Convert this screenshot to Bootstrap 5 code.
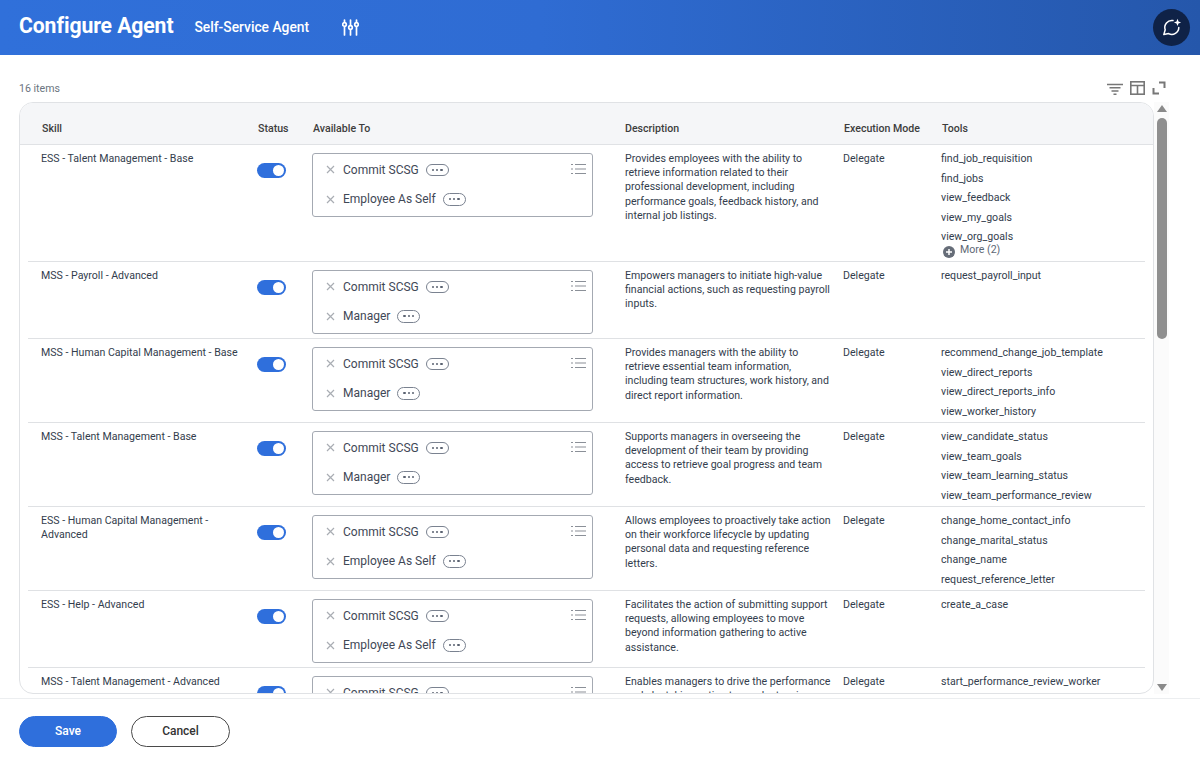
<!DOCTYPE html>
<html lang="en">
<head>
<meta charset="UTF-8">
<title>Configure Agent</title>
<link href="https://cdn.jsdelivr.net/npm/bootstrap@5.3.0/dist/css/bootstrap.min.css" rel="stylesheet">
<style>
html, body { height: 760px; overflow: hidden; }
body { font-family: Roboto, "Liberation Sans", sans-serif; font-size: 10.6px; color: #333d4d; background: #fff; }
.app-head { height: 55px; background: linear-gradient(90deg, #3070da 0%, #2f6cd3 45%, #2557ab 100%); color: #fff; padding: 0 10px 0 19px; }
.app-title { font-size: 21.2px; font-weight: 700; margin: 0 21px 3px 0; letter-spacing: -.1px; }
.app-sub { font-size: 13.8px; font-weight: 500; margin-right: 33px; }
.ai-btn { width: 37px; height: 37px; border-radius: 50%; background: #0f2247; }
.tools-bar { height: 47px; padding: 0 34px 0 19px; }
.count-txt { color: #6b7480; font-size: 10.6px; padding-top: 26px; }
.bar-icons { gap: 7px; padding-top: 26px; }
.grid-wrap { padding-left: 19px; }
.grid-panel { width: 1135px; height: 592px; border: 1px solid #e0e2e5; border-radius: 14px; overflow: hidden; }
.grid-head { height: 42px; background: #f5f6f8; border-bottom: 1px solid #e0e2e5; padding: 0 8px; font-weight: 500; color: #3d3d3d; }
.grid-row { margin: 0 8px; border-bottom: 1px solid #dfe1e4; }
.c-skill { width: 229px; padding: 7px 16px 0 13px; line-height: 14.4px; flex: none; }
.c-status { width: 55px; padding-top: 18px; flex: none; }
.c-avail { width: 313px; padding: 8px 0 4px; flex: none; }
.c-desc { width: 218px; padding: 7px 10px 0 0; line-height: 14.2px; flex: none; }
.c-mode { width: 98px; padding-top: 7px; flex: none; line-height: 14.2px; }
.c-tools { flex: 1; padding-top: 4px; }
.grid-head > div { padding-top: 6px; padding-left: 1px; line-height: 40px; }
.grid-head .c-skill { padding-left: 14px; }
.grid-head .c-desc { padding-left: 0; }
.c-tools div { height: 19.6px; line-height: 19.6px; }
.more-line { height: 14px !important; line-height: 14px !important; color: #5e6875; margin: -4px 0 0 2px; gap: 5px; }
.more-line svg { margin-top: 3px; }
.switch-pill { display: block; width: 29px; height: 15px; border-radius: 8px; background: #2f6fdc; position: relative; }
.switch-pill::after { content: ""; position: absolute; right: 2px; top: 2px; width: 11px; height: 11px; border-radius: 50%; background: #fff; }
.pick-box { width: 281px; height: 64px; border: 1px solid #a4a9b2; border-radius: 3px; padding: 1px 8px 0 13px; position: relative; font-size: 12px; color: #3f4856; }
.pick-item { height: 29.5px; gap: 8px; }
.pick-item .x-mark { flex: none; }
.pill-dots { width: 23px; height: 12.5px; border: 1px solid #7a8290; border-radius: 7px; margin-left: -1px; gap: 2px; }
.pill-dots i { width: 2.4px; height: 2.4px; border-radius: 50%; background: #5a6270; display: block; }
.list-ic { position: absolute; right: 6px; top: 9px; }
.v-scroll { width: 15px; background: #fbfbfb; }
.v-scroll .up { width: 0; height: 0; border-left: 5px solid transparent; border-right: 5px solid transparent; border-bottom: 7px solid #8a8a8a; margin: 3px auto 6px; }
.v-scroll .thumb { width: 10px; height: 221px; background: #8f8f8f; border-radius: 5px; margin: 0 auto; }
.v-scroll .down { width: 0; height: 0; border-left: 5px solid transparent; border-right: 5px solid transparent; border-top: 7px solid #8a8a8a; margin: auto auto 3px; }
.save-bar { height: 62px; border-top: 1px solid #eceef0; padding: 17px 0 0 19px; margin-top: 4px; gap: 14px; }
.btn-save, .btn-cancel { height: 31px; width: 98px; border-radius: 16px; font-size: 12px; font-weight: 500; padding: 0; line-height: 29px; }
.btn-save { background: #2f6fdc; color: #fff; border: 1px solid #2f6fdc; }
.btn-cancel { background: #fff; color: #333; border: 1px solid #4a4a4a; width: 99px; }
</style>
</head>
<body>
<header class="app-head d-flex align-items-center">
    <h1 class="app-title">Configure Agent</h1>
    <span class="app-sub">Self-Service Agent</span>
    <svg width="17" height="17" viewBox="0 0 17 17" fill="none" stroke="#fff" stroke-width="1.7" stroke-linecap="round">
        <path d="M2.5 1v2M2.5 8v8M8.5 1v5M8.5 11v5M14.5 1v2M14.5 8v8"/>
        <circle cx="2.5" cy="5.5" r="1.8"/><circle cx="8.5" cy="8.5" r="1.8"/><circle cx="14.5" cy="5.5" r="1.8"/>
    </svg>
    <div class="ai-btn ms-auto d-flex align-items-center justify-content-center">
        <svg width="20" height="20" viewBox="0 0 20 20" fill="none">
            <path d="M11 2.6A7 7 0 0 0 3.2 11.8L1.8 16.6 6.6 15.6A7 7 0 0 0 16.8 9.5" stroke="#fff" stroke-width="1.5" stroke-linecap="round" stroke-linejoin="round"/>
            <path d="M15.5 0.8l1 2.6 2.6 1-2.6 1-1 2.6-1-2.6-2.6-1 2.6-1z" fill="#fff"/>
        </svg>
    </div>
</header>

<div class="tools-bar d-flex justify-content-between">
    <span class="count-txt">16 items</span>
    <div class="bar-icons d-flex align-items-start">
        <svg width="16" height="15" viewBox="0 0 16 15" fill="none" stroke="#777" stroke-width="1.4"><path d="M0 3.5h16M2.5 6.8h11M4.5 10h7M6.5 13.2h3"/></svg>
        <svg width="15" height="14" viewBox="0 0 15 14" fill="none" stroke="#777" stroke-width="1.6"><rect x=".8" y=".8" width="13.4" height="12.4"/><path d="M.8 4.5h13.4M7.5 4.5v8.7"/></svg>
        <svg width="14" height="14" viewBox="0 0 14 14" fill="none" stroke="#777" stroke-width="2"><path d="M7 1.5h5.5V7M1.5 7v5.5H7"/></svg>
    </div>
</div>

<div class="grid-wrap d-flex">
    <div class="grid-panel">
        <div class="grid-head d-flex">
            <div class="c-skill">Skill</div>
            <div class="c-status">Status</div>
            <div class="c-avail">Available To</div>
            <div class="c-desc">Description</div>
            <div class="c-mode">Execution Mode</div>
            <div class="c-tools">Tools</div>
        </div>

        <div class="grid-row d-flex" style="height:117px">
            <div class="c-skill">ESS - Talent Management - Base</div>
            <div class="c-status"><span class="switch-pill"></span></div>
            <div class="c-avail"><div class="pick-box">
                <div class="pick-item d-flex align-items-center"><svg class="x-mark" width="9" height="9" viewBox="0 0 9 9" stroke="#a9adb3" stroke-width="1.2"><path d="M1 1l7 7M8 1l-7 7"/></svg><span>Commit SCSG</span><span class="pill-dots d-flex align-items-center justify-content-center"><i></i><i></i><i></i></span></div>
                <div class="pick-item d-flex align-items-center"><svg class="x-mark" width="9" height="9" viewBox="0 0 9 9" stroke="#a9adb3" stroke-width="1.2"><path d="M1 1l7 7M8 1l-7 7"/></svg><span>Employee As Self</span><span class="pill-dots d-flex align-items-center justify-content-center"><i></i><i></i><i></i></span></div>
                <svg class="list-ic" width="15" height="12" viewBox="0 0 15 12" stroke="#8b9098" stroke-width="1.1"><path d="M4 1.5h11M4 6h11M4 10.5h11M0 1.5h2M0 6h2M0 10.5h2"/></svg>
            </div></div>
            <div class="c-desc">Provides employees with the ability to retrieve information related to their professional development, including performance goals, feedback history, and internal job listings.</div>
            <div class="c-mode">Delegate</div>
            <div class="c-tools">
                <div>find_job_requisition</div><div>find_jobs</div><div>view_feedback</div><div>view_my_goals</div><div>view_org_goals</div>
                <div class="more-line d-flex"><svg width="12" height="12" viewBox="0 0 12 12"><circle cx="6" cy="6" r="6" fill="#666d78"/><path d="M6 3v6M3 6h6" stroke="#fff" stroke-width="1.5"/></svg><span>More (2)</span></div>
            </div>
        </div>

        <div class="grid-row d-flex" style="height:77px">
            <div class="c-skill">MSS - Payroll - Advanced</div>
            <div class="c-status"><span class="switch-pill"></span></div>
            <div class="c-avail"><div class="pick-box">
                <div class="pick-item d-flex align-items-center"><svg class="x-mark" width="9" height="9" viewBox="0 0 9 9" stroke="#a9adb3" stroke-width="1.2"><path d="M1 1l7 7M8 1l-7 7"/></svg><span>Commit SCSG</span><span class="pill-dots d-flex align-items-center justify-content-center"><i></i><i></i><i></i></span></div>
                <div class="pick-item d-flex align-items-center"><svg class="x-mark" width="9" height="9" viewBox="0 0 9 9" stroke="#a9adb3" stroke-width="1.2"><path d="M1 1l7 7M8 1l-7 7"/></svg><span>Manager</span><span class="pill-dots d-flex align-items-center justify-content-center"><i></i><i></i><i></i></span></div>
                <svg class="list-ic" width="15" height="12" viewBox="0 0 15 12" stroke="#8b9098" stroke-width="1.1"><path d="M4 1.5h11M4 6h11M4 10.5h11M0 1.5h2M0 6h2M0 10.5h2"/></svg>
            </div></div>
            <div class="c-desc">Empowers managers to initiate high-value financial actions, such as requesting payroll inputs.</div>
            <div class="c-mode">Delegate</div>
            <div class="c-tools"><div>request_payroll_input</div></div>
        </div>

        <div class="grid-row d-flex" style="height:84px">
            <div class="c-skill">MSS - Human Capital Management - Base</div>
            <div class="c-status"><span class="switch-pill"></span></div>
            <div class="c-avail"><div class="pick-box">
                <div class="pick-item d-flex align-items-center"><svg class="x-mark" width="9" height="9" viewBox="0 0 9 9" stroke="#a9adb3" stroke-width="1.2"><path d="M1 1l7 7M8 1l-7 7"/></svg><span>Commit SCSG</span><span class="pill-dots d-flex align-items-center justify-content-center"><i></i><i></i><i></i></span></div>
                <div class="pick-item d-flex align-items-center"><svg class="x-mark" width="9" height="9" viewBox="0 0 9 9" stroke="#a9adb3" stroke-width="1.2"><path d="M1 1l7 7M8 1l-7 7"/></svg><span>Manager</span><span class="pill-dots d-flex align-items-center justify-content-center"><i></i><i></i><i></i></span></div>
                <svg class="list-ic" width="15" height="12" viewBox="0 0 15 12" stroke="#8b9098" stroke-width="1.1"><path d="M4 1.5h11M4 6h11M4 10.5h11M0 1.5h2M0 6h2M0 10.5h2"/></svg>
            </div></div>
            <div class="c-desc">Provides managers with the ability to retrieve essential team information, including team structures, work history, and direct report information.</div>
            <div class="c-mode">Delegate</div>
            <div class="c-tools"><div>recommend_change_job_template</div><div>view_direct_reports</div><div>view_direct_reports_info</div><div>view_worker_history</div></div>
        </div>

        <div class="grid-row d-flex" style="height:84px">
            <div class="c-skill">MSS - Talent Management - Base</div>
            <div class="c-status"><span class="switch-pill"></span></div>
            <div class="c-avail"><div class="pick-box">
                <div class="pick-item d-flex align-items-center"><svg class="x-mark" width="9" height="9" viewBox="0 0 9 9" stroke="#a9adb3" stroke-width="1.2"><path d="M1 1l7 7M8 1l-7 7"/></svg><span>Commit SCSG</span><span class="pill-dots d-flex align-items-center justify-content-center"><i></i><i></i><i></i></span></div>
                <div class="pick-item d-flex align-items-center"><svg class="x-mark" width="9" height="9" viewBox="0 0 9 9" stroke="#a9adb3" stroke-width="1.2"><path d="M1 1l7 7M8 1l-7 7"/></svg><span>Manager</span><span class="pill-dots d-flex align-items-center justify-content-center"><i></i><i></i><i></i></span></div>
                <svg class="list-ic" width="15" height="12" viewBox="0 0 15 12" stroke="#8b9098" stroke-width="1.1"><path d="M4 1.5h11M4 6h11M4 10.5h11M0 1.5h2M0 6h2M0 10.5h2"/></svg>
            </div></div>
            <div class="c-desc">Supports managers in overseeing the development of their team by providing access to retrieve goal progress and team feedback.</div>
            <div class="c-mode">Delegate</div>
            <div class="c-tools"><div>view_candidate_status</div><div>view_team_goals</div><div>view_team_learning_status</div><div>view_team_performance_review</div></div>
        </div>

        <div class="grid-row d-flex" style="height:84px">
            <div class="c-skill">ESS - Human Capital Management - Advanced</div>
            <div class="c-status"><span class="switch-pill"></span></div>
            <div class="c-avail"><div class="pick-box">
                <div class="pick-item d-flex align-items-center"><svg class="x-mark" width="9" height="9" viewBox="0 0 9 9" stroke="#a9adb3" stroke-width="1.2"><path d="M1 1l7 7M8 1l-7 7"/></svg><span>Commit SCSG</span><span class="pill-dots d-flex align-items-center justify-content-center"><i></i><i></i><i></i></span></div>
                <div class="pick-item d-flex align-items-center"><svg class="x-mark" width="9" height="9" viewBox="0 0 9 9" stroke="#a9adb3" stroke-width="1.2"><path d="M1 1l7 7M8 1l-7 7"/></svg><span>Employee As Self</span><span class="pill-dots d-flex align-items-center justify-content-center"><i></i><i></i><i></i></span></div>
                <svg class="list-ic" width="15" height="12" viewBox="0 0 15 12" stroke="#8b9098" stroke-width="1.1"><path d="M4 1.5h11M4 6h11M4 10.5h11M0 1.5h2M0 6h2M0 10.5h2"/></svg>
            </div></div>
            <div class="c-desc">Allows employees to proactively take action on their workforce lifecycle by updating personal data and requesting reference letters.</div>
            <div class="c-mode">Delegate</div>
            <div class="c-tools"><div>change_home_contact_info</div><div>change_marital_status</div><div>change_name</div><div>request_reference_letter</div></div>
        </div>

        <div class="grid-row d-flex" style="height:77px">
            <div class="c-skill">ESS - Help - Advanced</div>
            <div class="c-status"><span class="switch-pill"></span></div>
            <div class="c-avail"><div class="pick-box">
                <div class="pick-item d-flex align-items-center"><svg class="x-mark" width="9" height="9" viewBox="0 0 9 9" stroke="#a9adb3" stroke-width="1.2"><path d="M1 1l7 7M8 1l-7 7"/></svg><span>Commit SCSG</span><span class="pill-dots d-flex align-items-center justify-content-center"><i></i><i></i><i></i></span></div>
                <div class="pick-item d-flex align-items-center"><svg class="x-mark" width="9" height="9" viewBox="0 0 9 9" stroke="#a9adb3" stroke-width="1.2"><path d="M1 1l7 7M8 1l-7 7"/></svg><span>Employee As Self</span><span class="pill-dots d-flex align-items-center justify-content-center"><i></i><i></i><i></i></span></div>
                <svg class="list-ic" width="15" height="12" viewBox="0 0 15 12" stroke="#8b9098" stroke-width="1.1"><path d="M4 1.5h11M4 6h11M4 10.5h11M0 1.5h2M0 6h2M0 10.5h2"/></svg>
            </div></div>
            <div class="c-desc">Facilitates the action of submitting support requests, allowing employees to move beyond information gathering to active assistance.</div>
            <div class="c-mode">Delegate</div>
            <div class="c-tools"><div>create_a_case</div></div>
        </div>

        <div class="grid-row d-flex border-0" style="height:84px">
            <div class="c-skill">MSS - Talent Management - Advanced</div>
            <div class="c-status"><span class="switch-pill"></span></div>
            <div class="c-avail"><div class="pick-box">
                <div class="pick-item d-flex align-items-center"><svg class="x-mark" width="9" height="9" viewBox="0 0 9 9" stroke="#a9adb3" stroke-width="1.2"><path d="M1 1l7 7M8 1l-7 7"/></svg><span>Commit SCSG</span><span class="pill-dots d-flex align-items-center justify-content-center"><i></i><i></i><i></i></span></div>
                <div class="pick-item d-flex align-items-center"><svg class="x-mark" width="9" height="9" viewBox="0 0 9 9" stroke="#a9adb3" stroke-width="1.2"><path d="M1 1l7 7M8 1l-7 7"/></svg><span>Manager</span><span class="pill-dots d-flex align-items-center justify-content-center"><i></i><i></i><i></i></span></div>
                <svg class="list-ic" width="15" height="12" viewBox="0 0 15 12" stroke="#8b9098" stroke-width="1.1"><path d="M4 1.5h11M4 6h11M4 10.5h11M0 1.5h2M0 6h2M0 10.5h2"/></svg>
            </div></div>
            <div class="c-desc">Enables managers to drive the performance cycle by taking action to conduct reviews and provide feedback to their team.</div>
            <div class="c-mode">Delegate</div>
            <div class="c-tools"><div>start_performance_review_worker</div></div>
        </div>
    </div>
    <div class="v-scroll d-flex flex-column">
        <div class="up"></div>
        <div class="thumb"></div>
        <div class="down"></div>
    </div>
</div>

<footer class="save-bar d-flex align-items-start">
    <button type="button" class="btn btn-save">Save</button>
    <button type="button" class="btn btn-cancel">Cancel</button>
</footer>
<script src="https://cdn.jsdelivr.net/npm/bootstrap@5.3.0/dist/js/bootstrap.bundle.min.js"></script>
</body>
</html>
